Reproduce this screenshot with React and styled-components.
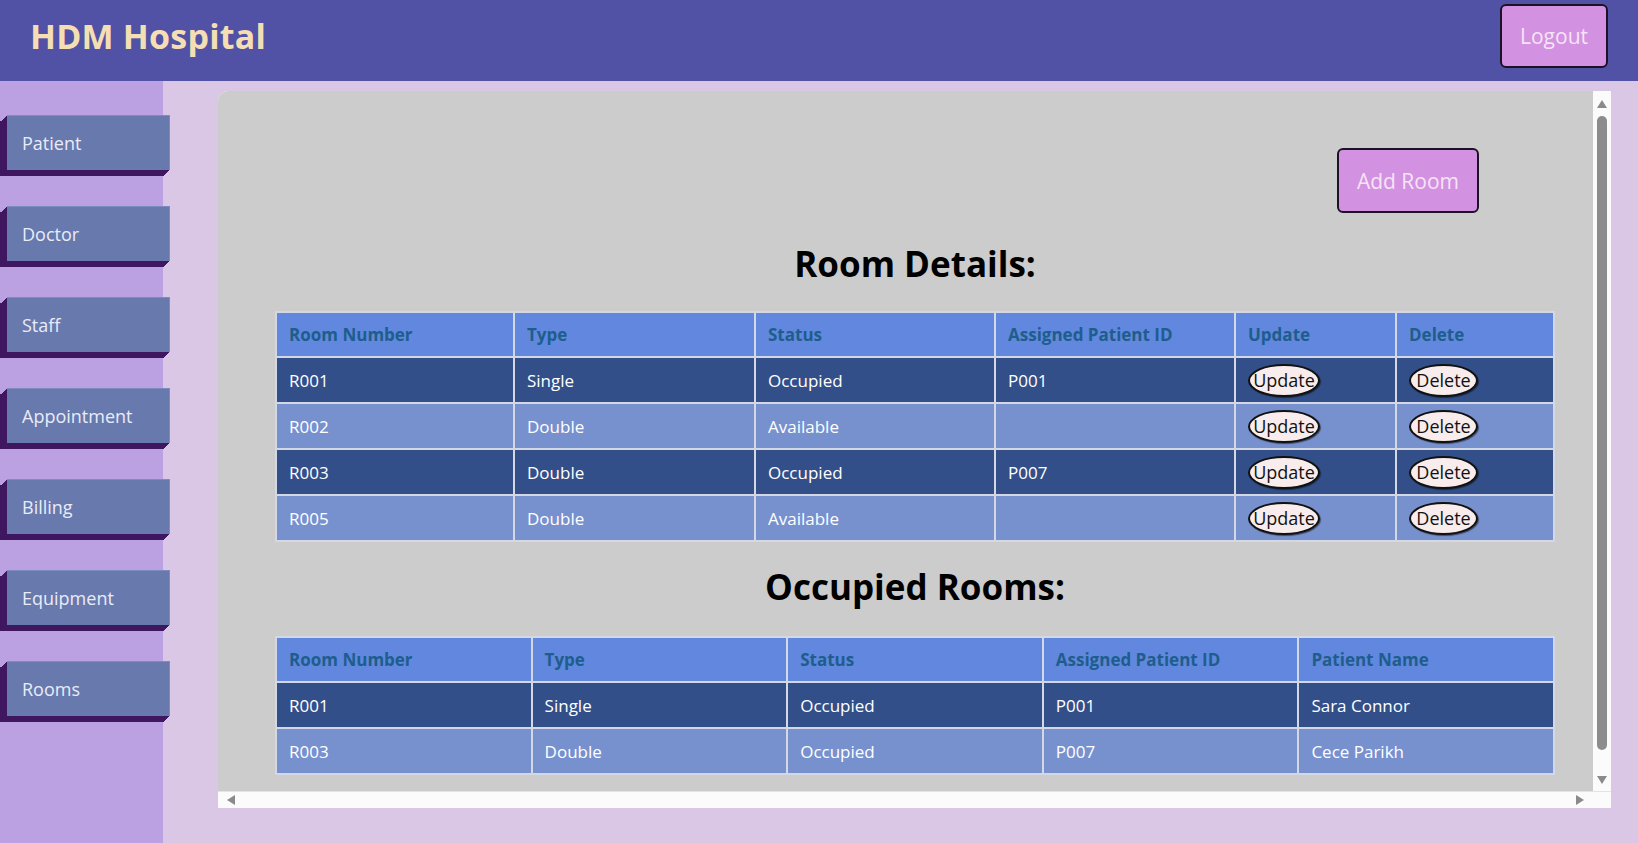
import React from "react";
import styled, { createGlobalStyle } from "styled-components";

const GlobalStyle = createGlobalStyle`
  body {
    margin: 0;
    font-family: "Open Sans", "Noto Sans", sans-serif;
    background-color: #dac7e6;
  }
`;

const rooms = [
  { no: "R001", type: "Single", status: "Occupied", pid: "P001" },
  { no: "R002", type: "Double", status: "Available", pid: "" },
  { no: "R003", type: "Double", status: "Occupied", pid: "P007" },
  { no: "R005", type: "Double", status: "Available", pid: "" },
];

const occupied = [
  { no: "R001", type: "Single", status: "Occupied", pid: "P001", name: "Sara Connor" },
  { no: "R003", type: "Double", status: "Occupied", pid: "P007", name: "Cece Parikh" },
];

const menu = ["Patient", "Doctor", "Staff", "Appointment", "Billing", "Equipment", "Rooms"];

// little scrollbar arrows
const Arrow = ({ dir }) => {
  const pts = {
    up: "0,8 5,0 10,8",
    down: "0,0 10,0 5,8",
    left: "8,0 8,10 0,5",
    right: "0,0 8,5 0,10",
  }[dir];
  const vertical = dir === "up" || dir === "down";
  return (
    <svg width={vertical ? 10 : 8} height={vertical ? 8 : 10} viewBox={vertical ? "0 0 10 8" : "0 0 8 10"}>
      <polygon points={pts} fill="#8a8a8a" />
    </svg>
  );
};

const App = () => {
  return (
    <Page>
      <GlobalStyle />
      <Header>
        <Title>HDM Hospital</Title>
        <PurpleButton $w="108px" $h="64px">Logout</PurpleButton>
      </Header>
      <Body>
        <Sidebar>
          {menu.map((m) => (
            <SideButton key={m}>{m}</SideButton>
          ))}
        </Sidebar>
        <Main>
          <Panel>
            <Content>
              <TopRow>
                <PurpleButton $w="142px" $h="65px">Add Room</PurpleButton>
              </TopRow>
              <Heading $top="30px" $bottom="26px">Room Details:</Heading>
              <Table>
                <thead>
                  <tr>
                    <Th $w="238px">Room Number</Th>
                    <Th $w="241px">Type</Th>
                    <Th $w="240px">Status</Th>
                    <Th $w="240px">Assigned Patient ID</Th>
                    <Th $w="161px">Update</Th>
                    <Th>Delete</Th>
                  </tr>
                </thead>
                <tbody>
                  {rooms.map((r, i) => (
                    <Row key={r.no} $dark={i % 2 === 0}>
                      <Td>{r.no}</Td>
                      <Td>{r.type}</Td>
                      <Td>{r.status}</Td>
                      <Td>{r.pid}</Td>
                      <Td>
                        <OvalButton $w="72px">Update</OvalButton>
                      </Td>
                      <Td>
                        <OvalButton $w="69px">Delete</OvalButton>
                      </Td>
                    </Row>
                  ))}
                </tbody>
              </Table>
              <Heading $top="24px" $bottom="28px">Occupied Rooms:</Heading>
              <Table>
                <thead>
                  <tr>
                    <Th $w="20%">Room Number</Th>
                    <Th $w="20%">Type</Th>
                    <Th $w="20%">Status</Th>
                    <Th $w="20%">Assigned Patient ID</Th>
                    <Th $w="20%">Patient Name</Th>
                  </tr>
                </thead>
                <tbody>
                  {occupied.map((r, i) => (
                    <Row key={r.no} $dark={i % 2 === 0}>
                      <Td>{r.no}</Td>
                      <Td>{r.type}</Td>
                      <Td>{r.status}</Td>
                      <Td>{r.pid}</Td>
                      <Td>{r.name}</Td>
                    </Row>
                  ))}
                </tbody>
              </Table>
            </Content>
            <VScroll>
              <Arrow dir="up" />
              <Thumb />
              <Arrow dir="down" />
            </VScroll>
            <HScroll>
              <Arrow dir="left" />
              <Arrow dir="right" />
            </HScroll>
          </Panel>
        </Main>
      </Body>
    </Page>
  );
};

export default App;

const Page = styled.div`
  height: 843px;
  display: flex;
  flex-direction: column;
  overflow: hidden;
`;

const Header = styled.div`
  height: 81px;
  flex-shrink: 0;
  background-color: #5152a5;
  display: flex;
  align-items: flex-start;
  justify-content: space-between;
  padding: 4px 30px 0 30px;
  box-sizing: border-box;
`;

const Title = styled.h1`
  margin: 0;
  color: #f5deb3;
  font-size: 34px;
  line-height: 64px;
  font-weight: 700;
  letter-spacing: 0.2px;
`;

const PurpleButton = styled.button`
  width: ${(p) => p.$w};
  height: ${(p) => p.$h};
  background-color: #d291e1;
  border: 2px solid #1c1226;
  border-radius: 6px;
  color: #f6e4f6;
  font-family: "Open Sans", sans-serif;
  font-size: 21px;
  font-weight: 400;
  cursor: pointer;
`;

const Body = styled.div`
  flex: 1;
  display: flex;
  min-height: 0;
`;

const Sidebar = styled.div`
  width: 163px;
  flex-shrink: 0;
  background-color: #bba1e1;
  display: flex;
  flex-direction: column;
  gap: 36px;
  padding-top: 34px;
  box-sizing: border-box;
  position: relative;
  z-index: 1;
`;

const SideButton = styled.div`
  width: 163px;
  height: 55px;
  margin-left: 7px;
  box-sizing: border-box;
  background-color: #6879ad;
  border-top: 1px solid #7c8cc0;
  border-right: 1px solid #7c8cc0;
  color: #e8ecf8;
  font-size: 18px;
  font-weight: 400;
  display: flex;
  align-items: center;
  padding-left: 15px;
  box-shadow: -1px 1px 0 #3f1660, -2px 2px 0 #3f1660, -3px 3px 0 #3f1660,
    -4px 4px 0 #3f1660, -5px 5px 0 #3f1660, -6px 6px 0 #3f1660,
    -7px 6px 0 #3f1660;
`;

const Main = styled.div`
  flex: 1;
  padding: 10px 27px 35px 55px;
  min-width: 0;
  display: flex;
`;

const Panel = styled.div`
  flex: 1;
  display: grid;
  grid-template-columns: 1fr 18px;
  grid-template-rows: 1fr 17px;
  border-radius: 10px 0 0 0;
  overflow: hidden;
  background-color: #fbfbfb;
`;

const Content = styled.div`
  background-color: #cccccc;
  overflow: hidden;
  padding: 57px 38px 0 57px;
  box-sizing: border-box;
  min-width: 0;
  min-height: 0;
`;

const VScroll = styled.div`
  display: flex;
  flex-direction: column;
  align-items: center;
  padding: 9px 0 7px 0;
  gap: 8px;
`;

const Thumb = styled.div`
  flex: 1;
  width: 10px;
  border-radius: 5px;
  background-color: #8c8c8c;
  margin-bottom: 18px;
`;

const HScroll = styled.div`
  grid-column: 1 / 3;
  display: flex;
  align-items: center;
  justify-content: space-between;
  padding: 0 27px 0 9px;
  border-top: 1px solid #e4e4e4;
`;

const TopRow = styled.div`
  display: flex;
  justify-content: flex-end;
  padding-right: 76px;
`;

const Heading = styled.h2`
  margin: ${(p) => p.$top} 0 ${(p) => p.$bottom} 0;
  text-align: center;
  font-size: 35px;
  line-height: 42px;
  font-weight: 700;
  color: #000;
`;

const Table = styled.table`
  width: 1280px;
  border-collapse: collapse;
  font-size: 17px;
`;

const Th = styled.th`
  width: ${(p) => p.$w || "auto"};
  background-color: #6287de;
  color: #1d5e8c;
  font-weight: 700;
  text-align: left;
  height: 45px;
  padding: 0 12px;
  box-sizing: border-box;
  border: 2px solid #d3d8e4;
`;

const Row = styled.tr`
  background-color: ${(p) => (p.$dark ? "#324f89" : "#7791cf")};
`;

const Td = styled.td`
  color: #ffffff;
  height: 46px;
  padding: 0 12px;
  box-sizing: border-box;
  border: 2px solid #d3d8e4;
`;

const OvalButton = styled.button`
  width: ${(p) => p.$w};
  height: 33px;
  background-color: #f8ecec;
  border: 2px solid #111;
  border-radius: 50%;
  color: #111;
  font-family: "Open Sans", sans-serif;
  font-size: 18px;
  line-height: 1;
  padding: 0;
  box-shadow: 1px 1px 1px rgba(0, 0, 0, 0.5);
  cursor: pointer;
`;
